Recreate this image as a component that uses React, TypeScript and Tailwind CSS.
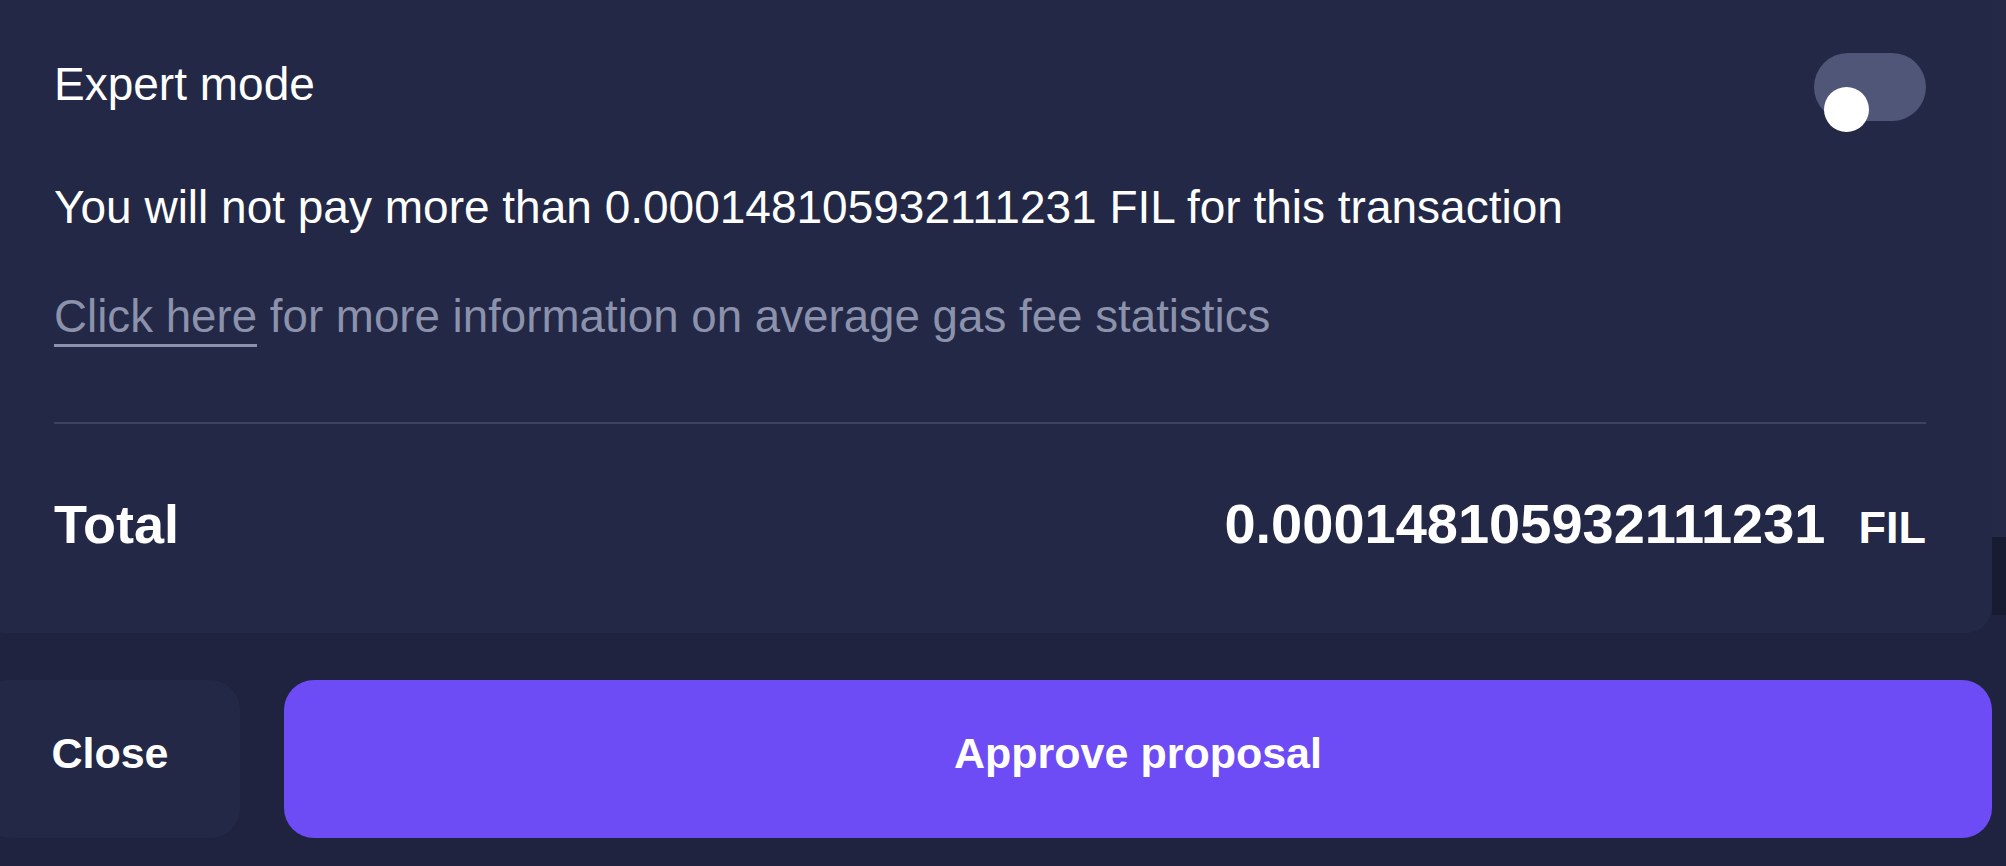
import React from "react";

export default function App() {
  return (
    <div
      className="flex w-[2006px] h-[866px] overflow-hidden bg-[#1f2340] text-white"
      style={{ fontFamily: '"Liberation Sans", Arial, sans-serif' }}
    >
      <div className="flex flex-col flex-1 -ml-[20px]">
        {/* Card */}
        <div className="bg-[#222845] rounded-b-[26px] pl-[74px] pr-[66px] pt-[53px] pb-[81px]">
          <div className="flex items-start justify-between">
            <div className="text-[46px] leading-none mt-[8px]">Expert mode</div>
            <div className="relative w-[112px] h-[68px] rounded-full bg-[#4f5677]">
              <div className="absolute left-[10px] top-[34px] w-[45px] h-[45px] rounded-full bg-white" />
            </div>
          </div>
          <div className="text-[46px] leading-none mt-[63px]">
            You will not pay more than 0.000148105932111231 FIL for this transaction
          </div>
          <div className="text-[45.7px] leading-none mt-[64px] text-[#8c92ab]">
            <span className="border-b-[3px] border-[#8c92ab] pb-[2px]">Click here</span> for more
            information on average gas fee statistics
          </div>
          <div className="h-[2px] bg-[#3d4463] mt-[82px]" />
          <div className="flex items-baseline justify-between mt-[72px] font-bold">
            <div className="text-[54px] leading-none">Total</div>
            <div className="flex items-baseline">
              <span className="text-[56px] leading-none">0.000148105932111231</span>
              <span className="text-[45px] leading-none ml-[33px]">FIL</span>
            </div>
          </div>
        </div>
        {/* Buttons */}
        <div className="flex gap-[44px] mt-[47px]">
          <button className="w-[260px] h-[158px] rounded-[30px] bg-[#222845] flex items-center justify-center pb-[11px] text-[43px] leading-none font-bold text-white">
            Close
          </button>
          <button className="flex-1 h-[158px] rounded-[30px] bg-[#6d4cf6] flex items-center justify-center pb-[11px] text-[43px] leading-none font-bold text-white">
            Approve proposal
          </button>
        </div>
      </div>
      {/* Right edge strip */}
      <div className="flex flex-col w-[14px]">
        <div className="h-[537px] bg-[#232946]" />
        <div className="h-[78px] bg-[#181c33]" />
      </div>
    </div>
  );
}
